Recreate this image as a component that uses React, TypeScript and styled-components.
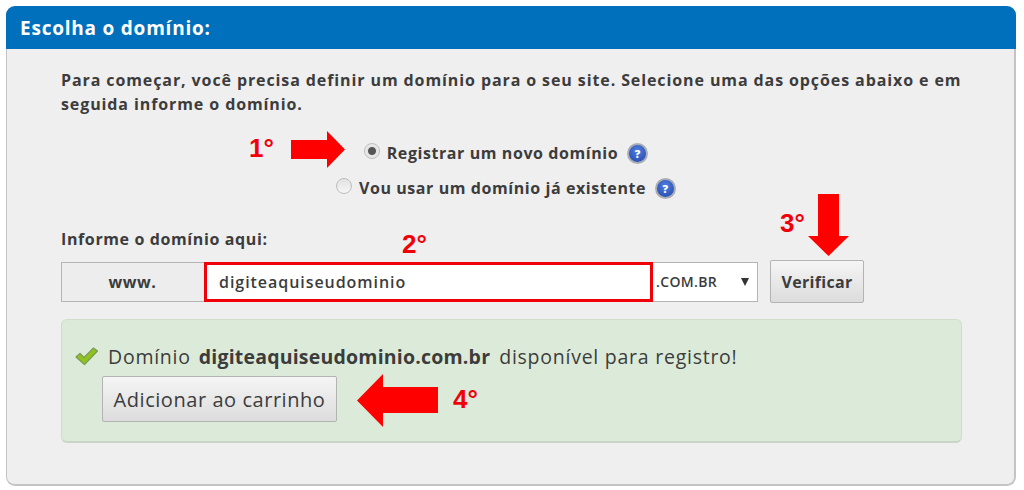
import React from 'react'
import styled, { createGlobalStyle } from 'styled-components'

const GlobalStyle = createGlobalStyle`
  html, body {
    margin: 0;
    padding: 0;
    background: #fff;
  }
  body {
    font-family: "Open Sans", Inter, "Liberation Sans", sans-serif;
    color: #3c3c3c;
  }
`

const Page = styled.div`
  position: relative;
  width: 1024px;
  height: 490px;
  padding: 6px 8px 4px 6px;
  box-sizing: border-box;
`

const Panel = styled.section`
  height: 480px;
  box-sizing: border-box;
  background: #efefef;
  border: 1px solid #c4c4c4;
  border-top: 0;
  border-bottom: 2px solid #c4c4c4;
  border-right: 2px solid #c4c4c4;
  border-radius: 9px;
`

const Header = styled.h2`
  margin: 0 -2px 0 -1px;
  height: 43px;
  padding: 1px 0 0 14px;
  box-sizing: border-box;
  display: flex;
  align-items: center;
  background: #0070bc;
  border-radius: 9px 9px 0 0;
  color: #fff;
  font-size: 19px;
  font-weight: 700;
  letter-spacing: 0.78px;
`

const Body = styled.div`
  padding: 19px 54px 0 54px;
  width: 901px;
  box-sizing: content-box;
`

const Intro = styled.p`
  margin: 0;
  font-size: 16px;
  line-height: 24px;
  font-weight: 700;
  letter-spacing: 0.9px;
  white-space: nowrap;
`

const RadioGroup = styled.div`
  margin-top: 26px;
  display: flex;
  flex-direction: column;
  gap: 13px;
  align-items: center;
  padding-right: 11px;
`

const RadioRow = styled.label`
  display: flex;
  align-items: center;
  height: 22px;
  font-size: 16px;
  font-weight: 700;
  letter-spacing: 0.58px;
  white-space: nowrap;
`

const RadioDot = styled.span<{ $checked?: boolean }>`
  width: 16px;
  height: 16px;
  margin: -5px 7px 0 0;
  border-radius: 50%;
  box-sizing: border-box;
  border: 1px solid #bdbdbd;
  background: ${p =>
    p.$checked
      ? 'radial-gradient(circle, #555 0 3.5px, #e4e4e4 4.5px, #f2f2f2 100%)'
      : 'linear-gradient(#e2e2e2, #f6f6f6)'};
`

const HelpIcon = styled.span`
  width: 21px;
  height: 21px;
  margin-left: 9px;
  display: flex;
  align-items: center;
  justify-content: center;
  border-radius: 50%;
  box-sizing: border-box;
  border: 2px solid #a9adb5;
  background: radial-gradient(circle at 50% 35%, #4f7fe0, #2345a8);
  color: #fff;
  font-size: 11px;
  font-weight: 800;
`

const FieldLabel = styled.div`
  margin-top: 30px;
  font-size: 16px;
  line-height: 20px;
  font-weight: 700;
  letter-spacing: 0.62px;
`

const DomainRow = styled.div`
  margin-top: 11px;
  display: flex;
  align-items: center;
  height: 43px;
`

const Prefix = styled.div`
  width: 143px;
  height: 40px;
  box-sizing: border-box;
  display: flex;
  align-items: center;
  justify-content: center;
  padding-right: 1px;
  background: #ededed;
  border: 1px solid #b4b4b4;
  border-right: 0;
  font-size: 16px;
  font-weight: 700;
  letter-spacing: 0.6px;
`

const DomainInput = styled.div`
  width: 449px;
  height: 40px;
  box-sizing: border-box;
  display: flex;
  align-items: center;
  padding-left: 12px;
  background: #fff;
  border: 3px solid #f00008;
  font-size: 16px;
  font-weight: 600;
  letter-spacing: 0.95px;
`

const TldSelect = styled.div`
  width: 105px;
  height: 40px;
  box-sizing: border-box;
  display: flex;
  align-items: center;
  justify-content: space-between;
  padding: 0 8px 0 3px;
  background: #fff;
  border: 1px solid #b4b4b4;
  border-left: 0;
  font-size: 14px;
  font-weight: 600;
  letter-spacing: 0.35px;

  &::after {
    content: '';
    border-left: 4.5px solid transparent;
    border-right: 4.5px solid transparent;
    border-top: 8px solid #333;
  }
`

const GreyButton = styled.button<{ $large?: boolean }>`
  box-sizing: border-box;
  display: block;
  padding: 0;
  background: linear-gradient(#f5f5f5, #dcdcdc);
  border: 1px solid #b3b3b3;
  border-radius: 2px;
  color: #3c3c3c;
  font-family: inherit;
  font-size: ${p => (p.$large ? '20px' : '16px')};
  font-weight: ${p => (p.$large ? 400 : 700)};
  letter-spacing: ${p => (p.$large ? '0.55px' : '0.3px')};
  width: ${p => (p.$large ? '235px' : '94px')};
  height: ${p => (p.$large ? '46px' : '43px')};
  white-space: nowrap;
`

const VerifyWrap = styled.div`
  margin-left: 12px;
`

const SuccessBox = styled.div`
  margin-top: 16px;
  width: 901px;
  height: 124px;
  box-sizing: border-box;
  padding: 24px 0 0 13px;
  background: #dcebd9;
  border: 1px solid #cfdecb;
  border-bottom: 2px solid #c9d6c6;
  border-radius: 6px;
`

const SuccessLine = styled.div`
  display: flex;
  align-items: center;
  height: 24px;
  font-size: 19.5px;
  font-weight: 400;
  letter-spacing: 0.75px;
  white-space: nowrap;

  b {
    font-weight: 700;
    letter-spacing: 0.2px;
    margin: 0 9px 0 8px;
  }
`

const CheckIcon = styled.svg`
  width: 23px;
  height: 20px;
  margin-right: 10px;
`

const AddRow = styled.div`
  margin: 8px 0 0 27px;
`

const Mark = styled.svg<{ $x: number; $y: number }>`
  position: absolute;
  left: ${p => p.$x}px;
  top: ${p => p.$y}px;
`

const StepLabel = styled.span<{ $x: number; $y: number }>`
  position: absolute;
  left: ${p => p.$x}px;
  top: ${p => p.$y}px;
  color: #f00008;
  font-family: "Liberation Sans", Arial, sans-serif;
  font-size: 26px;
  line-height: 30px;
  font-weight: 700;
`

export default function App() {
  return (
    <Page>
      <GlobalStyle />
      <Panel>
        <Header>Escolha o domínio:</Header>
        <Body>
          <Intro>
            Para começar, você precisa definir um domínio para o seu site. Selecione uma das opções abaixo e em
            <br />
            seguida informe o domínio.
          </Intro>
          <RadioGroup>
            <RadioRow>
              <RadioDot $checked />
              Registrar um novo domínio
              <HelpIcon>?</HelpIcon>
            </RadioRow>
            <RadioRow>
              <RadioDot />
              Vou usar um domínio já existente
              <HelpIcon>?</HelpIcon>
            </RadioRow>
          </RadioGroup>
          <FieldLabel>Informe o domínio aqui:</FieldLabel>
          <DomainRow>
            <Prefix>www.</Prefix>
            <DomainInput>digiteaquiseudominio</DomainInput>
            <TldSelect>.COM.BR</TldSelect>
            <VerifyWrap>
              <GreyButton>Verificar</GreyButton>
            </VerifyWrap>
          </DomainRow>
          <SuccessBox>
            <SuccessLine>
              <CheckIcon viewBox="0 0 23 20">
                <path
                  d="M1 11 L5 7.5 L9 11.5 L18.5 2 L22.5 5 L9.5 18.5 Z"
                  fill="#8fc31f"
                  stroke="#7d9a55"
                  strokeWidth="1.2"
                  strokeLinejoin="round"
                />
              </CheckIcon>
              Domínio <b>digiteaquiseudominio.com.br</b> disponível para registro!
            </SuccessLine>
            <AddRow>
              <GreyButton $large>Adicionar ao carrinho</GreyButton>
            </AddRow>
          </SuccessBox>
        </Body>
      </Panel>

      <StepLabel $x={249} $y={133}>1°</StepLabel>
      <Mark $x={291} $y={131} width="54" height="37" viewBox="0 0 54 37">
        <path d="M0 9 H36 V0 L54 18.5 L36 37 V28 H0 Z" fill="#f00" />
      </Mark>
      <StepLabel $x={402} $y={229}>2°</StepLabel>
      <StepLabel $x={780} $y={208}>3°</StepLabel>
      <Mark $x={808} $y={194} width="41" height="62" viewBox="0 0 41 62">
        <path d="M10 0 H31 V42 H41 L20.5 62 L0 42 H10 Z" fill="#f00" />
      </Mark>
      <Mark $x={357} $y={374} width="82" height="53" viewBox="0 0 82 53">
        <path d="M0 26.5 L26 0 V13 H81 V39 H26 V53 Z" fill="#f00" />
      </Mark>
      <StepLabel $x={453} $y={384}>4°</StepLabel>
    </Page>
  )
}
